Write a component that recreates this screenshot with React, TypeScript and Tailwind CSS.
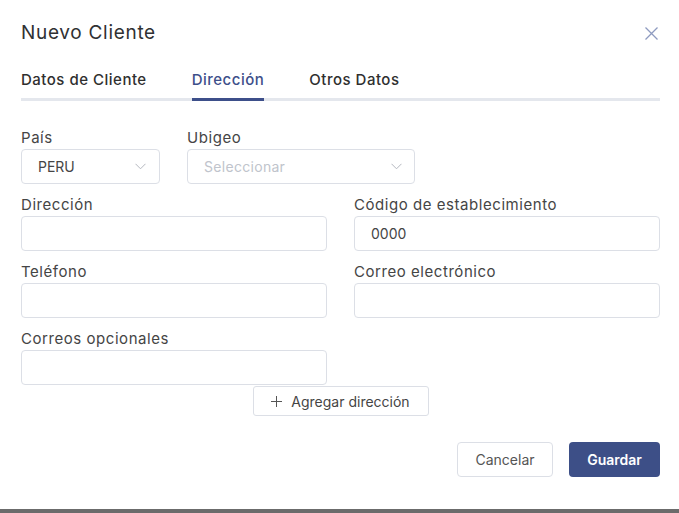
import { useState } from 'react'

const Chevron = () => (
  <svg width="11" height="7" viewBox="0 0 11 7" fill="none" className="shrink-0">
    <path d="M0.5 0.8 L5.5 5.8 L10.5 0.8" stroke="#b4b7bf" strokeWidth="1" />
  </svg>
)

const Label = ({ children }: { children: string }) => (
  <label className="text-[15px] leading-[20px] tracking-[0.55px] text-[#454545]">{children}</label>
)

const Field = ({ label, value }: { label: string; value?: string }) => (
  <div className="flex flex-col">
    <Label>{label}</Label>
    <div className="mt-[1px] h-[35px] rounded-[4px] border border-[#dcdfe6] bg-white px-4 flex items-center text-[14px] text-[#454545]">
      {value}
    </div>
  </div>
)

const tabs = ['Datos de Cliente', 'Dirección', 'Otros Datos']

const App = () => {
  const [active, setActive] = useState(1)

  return (
    <div
      className="w-full h-[513px] bg-white flex flex-col"
      style={{ fontFamily: 'Inter, "Noto Sans", sans-serif' }}
    >
      <div className="pl-[21px] pr-[19px] flex flex-col flex-1">
        {/* header */}
        <div className="pt-[20px] flex items-center justify-between">
          <h2 className="text-[19px] leading-[26px] tracking-[0.7px] text-[#303133]">Nuevo Cliente</h2>
          <button className="mr-[2px] text-[#8e9bc0]">
            <svg width="13" height="13" viewBox="0 0 13 13" fill="none">
              <path d="M0.5 0.5 L12.5 12.5 M12.5 0.5 L0.5 12.5" stroke="currentColor" strokeWidth="1.3" />
            </svg>
          </button>
        </div>

        {/* tabs */}
        <div className="mt-[24px] flex gap-[45px] border-b-[3px] border-[#e4e7ed]">
          {tabs.map((t, i) => (
            <button
              key={t}
              onClick={() => setActive(i)}
              className={`pb-[8px] -mb-[3px] border-b-[3px] text-[15px] leading-[20px] tracking-[0.5px] font-medium ${
                i === active ? 'border-[#3d4f8a] text-[#3d4f8a]' : 'border-transparent text-[#2f2f2f]'
              }`}
            >
              {t}
            </button>
          ))}
        </div>

        {/* form */}
        <div className="mt-[27px] flex flex-col gap-[11px]">
          <div className="flex gap-[27px]">
            <div className="flex flex-col w-[139px]">
              <Label>País</Label>
              <div className="mt-[1px] h-[35px] rounded-[4px] border border-[#dcdfe6] pl-4 pr-[13px] flex items-center justify-between text-[14px] text-[#454545]">
                <span>PERU</span>
                <Chevron />
              </div>
            </div>
            <div className="flex flex-col w-[228px]">
              <Label>Ubigeo</Label>
              <div className="mt-[1px] h-[35px] rounded-[4px] border border-[#dcdfe6] pl-4 pr-[12px] flex items-center justify-between text-[14px] tracking-[0.3px] text-[#c0c4cc]">
                <span>Seleccionar</span>
                <Chevron />
              </div>
            </div>
          </div>

          <div className="grid grid-cols-2 gap-x-[27px] gap-y-[11px]">
            <Field label="Dirección" />
            <Field label="Código de establecimiento" value="0000" />
            <Field label="Teléfono" />
            <Field label="Correo electrónico" />
            <Field label="Correos opcionales" />
          </div>
        </div>

        <div className="mt-[1px] flex justify-center">
          <button className="w-[176px] h-[30px] rounded-[3px] border border-[#dcdfe6] flex items-center justify-center gap-[9px] text-[14px] text-[#454545]">
            <svg width="11" height="11" viewBox="0 0 11 11" fill="none">
              <path d="M5.5 0 V11 M0 5.5 H11" stroke="#555" strokeWidth="1" />
            </svg>
            Agregar dirección
          </button>
        </div>

        {/* footer */}
        <div className="mt-[26px] flex justify-end gap-[16px]">
          <button className="w-[96px] h-[35px] rounded-[4px] border border-[#dcdfe6] text-[14px] text-[#555]">
            Cancelar
          </button>
          <button className="w-[91px] h-[35px] rounded-[4px] bg-[#3d4f87] text-[14px] font-semibold text-white">
            Guardar
          </button>
        </div>
      </div>

      <div className="h-[4px] bg-[#6b6b6b]" />
    </div>
  )
}

export default App
